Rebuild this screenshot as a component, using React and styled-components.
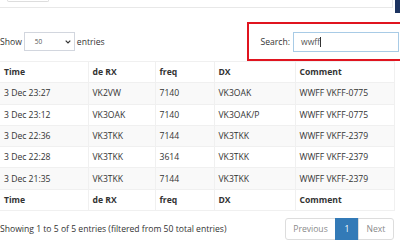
import React from 'react';
import styled, { createGlobalStyle } from 'styled-components';

const GlobalStyle = createGlobalStyle`
  body {
    margin: 0;
    background: #fff;
    color: #333;
    font-family: "Open Sans", "DejaVu Sans", sans-serif;
    font-size: 8.6px;
  }
`;

const Page = styled.div`
  width: 400px;
  height: 249px;
  overflow: hidden;
  background: #fff;
`;

const TopRow = styled.div`
  display: flex;
  align-items: flex-start;
  height: 8px;
`;

const TopBox = styled.div`
  width: 393px;
  height: 7px;
  border-right: 1px solid #e8e8e8;
  border-bottom: 1px solid #e8e8e8;
`;

const TopButton = styled.div`
  margin-left: 7px;
  width: 40px;
  height: 1px;
  border: 1px solid #ddd;
  border-top: none;
  border-radius: 0 0 3px 3px;
`;

const NavyTab = styled.div`
  margin-left: 2px;
  width: 5px;
  height: 13px;
  flex-shrink: 0;
  background: #1d3461;
`;

const Controls = styled.div`
  display: flex;
  align-items: center;
  justify-content: space-between;
  margin-top: 14px;
  height: 39px;
`;

const Length = styled.label`
  display: flex;
  align-items: center;
  gap: 2px;
`;

const Select = styled.div`
  display: flex;
  align-items: center;
  justify-content: space-between;
  box-sizing: border-box;
  width: 51px;
  height: 19px;
  padding: 0 3px 0 10px;
  border: 1px solid #d2d6de;
  font-size: 6.5px;
  color: #555;
`;

const SearchBox = styled.div`
  display: flex;
  align-items: center;
  justify-content: flex-end;
  box-sizing: border-box;
  width: 158px;
  height: 39px;
  margin-right: -5px;
  padding-right: 4px;
  border: 2px solid #e0141f;
  gap: 3px;
`;

const SearchInput = styled.div`
  display: flex;
  align-items: center;
  box-sizing: border-box;
  width: 106px;
  height: 20px;
  padding-left: 7px;
  border: 1px solid #a8cbe6;
  color: #555;
`;

const Caret = styled.span`
  display: inline-block;
  width: 1px;
  height: 10px;
  background: #333;
`;

const Table = styled.table`
  width: 394px;
  border-collapse: collapse;
  table-layout: fixed;
`;

const Row = styled.tr`
  height: 21.3px;
  background: ${p => (p.$striped ? '#f9f9f9' : '#fff')};
`;

const Cell = styled.td`
  padding: 0 4px;
  border: 1px solid #f0f0f0;
  white-space: nowrap;
  overflow: hidden;
  text-align: left;
  font-weight: ${p => (p.$head ? 700 : 400)};
  &:first-child {
    border-left: none;
  }
`;

const Footer = styled.div`
  display: flex;
  align-items: center;
  justify-content: space-between;
  width: 394px;
  margin-top: 7px;
  height: 22px;
`;

const Pager = styled.div`
  display: flex;
  height: 22px;
`;

const PageButton = styled.div`
  display: flex;
  align-items: center;
  justify-content: center;
  box-sizing: border-box;
  width: ${p => p.$w}px;
  border: 1px solid ${p => (p.$active ? '#337ab7' : '#ddd')};
  margin-left: -1px;
  background: ${p => (p.$active ? '#337ab7' : '#fff')};
  color: ${p => (p.$active ? '#fff' : '#8a8a8a')};
  &:first-child {
    margin-left: 0;
    border-radius: 3px 0 0 3px;
  }
  &:last-child {
    border-radius: 0 3px 3px 0;
  }
`;

const cols = ['Time', 'de RX', 'freq', 'DX', 'Comment'];
const widths = [88, 67, 59, 81, 99];

const rows = [
  ['3 Dec 23:27', 'VK2VW', '7140', 'VK3OAK', 'WWFF VKFF-0775'],
  ['3 Dec 23:12', 'VK3OAK', '7140', 'VK3OAK/P', 'WWFF VKFF-0775'],
  ['3 Dec 22:36', 'VK3TKK', '7144', 'VK3TKK', 'WWFF VKFF-2379'],
  ['3 Dec 22:28', 'VK3TKK', '3614', 'VK3TKK', 'WWFF VKFF-2379'],
  ['3 Dec 21:35', 'VK3TKK', '7144', 'VK3TKK', 'WWFF VKFF-2379'],
];

const Chevron = () => (
  <svg width="6" height="4" viewBox="0 0 6 4">
    <path d="M0.7 0.7 L3 3 L5.3 0.7" fill="none" stroke="#333" strokeWidth="1.2" />
  </svg>
);

const HeadRow = () => (
  <Row>
    {cols.map(c => <Cell as="th" $head key={c}>{c}</Cell>)}
  </Row>
);

export default function App() {
  return (
    <Page>
      <GlobalStyle />
      <TopRow>
        <TopBox>
          <TopButton />
        </TopBox>
        <NavyTab />
      </TopRow>

      <Controls>
        <Length>
          Show
          <Select>
            <span>50</span>
            <Chevron />
          </Select>
          entries
        </Length>
        <SearchBox>
          Search:
          <SearchInput>
            wwff<Caret />
          </SearchInput>
        </SearchBox>
      </Controls>

      <Table>
        <colgroup>
          {widths.map((w, i) => <col key={i} style={{ width: w }} />)}
        </colgroup>
        <thead>
          <HeadRow />
        </thead>
        <tbody>
          {rows.map((r, i) => (
            <Row key={i} $striped={i % 2 === 0}>
              {r.map((v, j) => <Cell key={j}>{v}</Cell>)}
            </Row>
          ))}
        </tbody>
        <tfoot>
          <HeadRow />
        </tfoot>
      </Table>

      <Footer>
        <span>Showing 1 to 5 of 5 entries (filtered from 50 total entries)</span>
        <Pager>
          <PageButton $w={51}>Previous</PageButton>
          <PageButton $w={24} $active>1</PageButton>
          <PageButton $w={36}>Next</PageButton>
        </Pager>
      </Footer>
    </Page>
  );
}
